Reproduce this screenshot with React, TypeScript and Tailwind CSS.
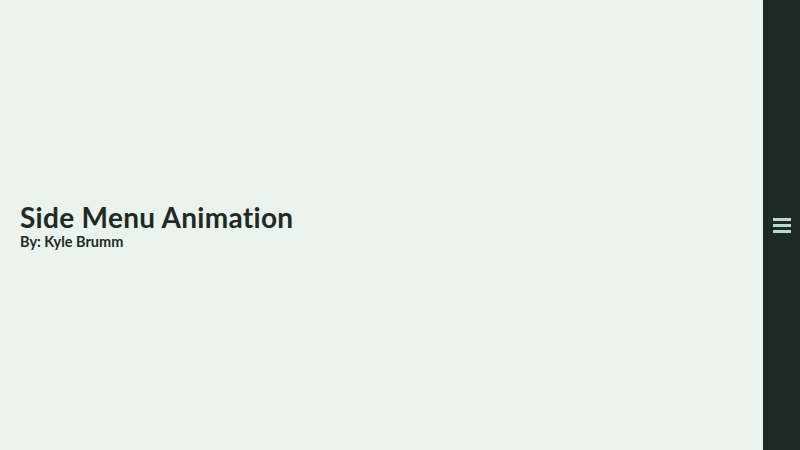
export default function App() {
  return (
    <div className="flex h-[450px] w-[800px] bg-[#eaf3ee]" style={{ fontFamily: 'Lato, "Open Sans", sans-serif' }}>
      <main className="flex flex-1 flex-col justify-center px-5 pt-[1px] text-[#1f2a25]">
        <h1 className="text-[28px] font-bold leading-[31px] tracking-[0.3px]">Side Menu Animation</h1>
        <p className="text-[14.5px] font-bold leading-[17px]">By: Kyle Brumm</p>
      </main>
      <aside className="flex w-[37px] items-center justify-center bg-[#1f2925]">
        <button className="flex flex-col gap-[3px]" aria-label="Menu">
          <span className="block h-[3px] w-[18px] bg-[#b4dcc9]" />
          <span className="block h-[3px] w-[18px] bg-[#b4dcc9]" />
          <span className="block h-[3px] w-[18px] bg-[#b4dcc9]" />
        </button>
      </aside>
    </div>
  );
}
